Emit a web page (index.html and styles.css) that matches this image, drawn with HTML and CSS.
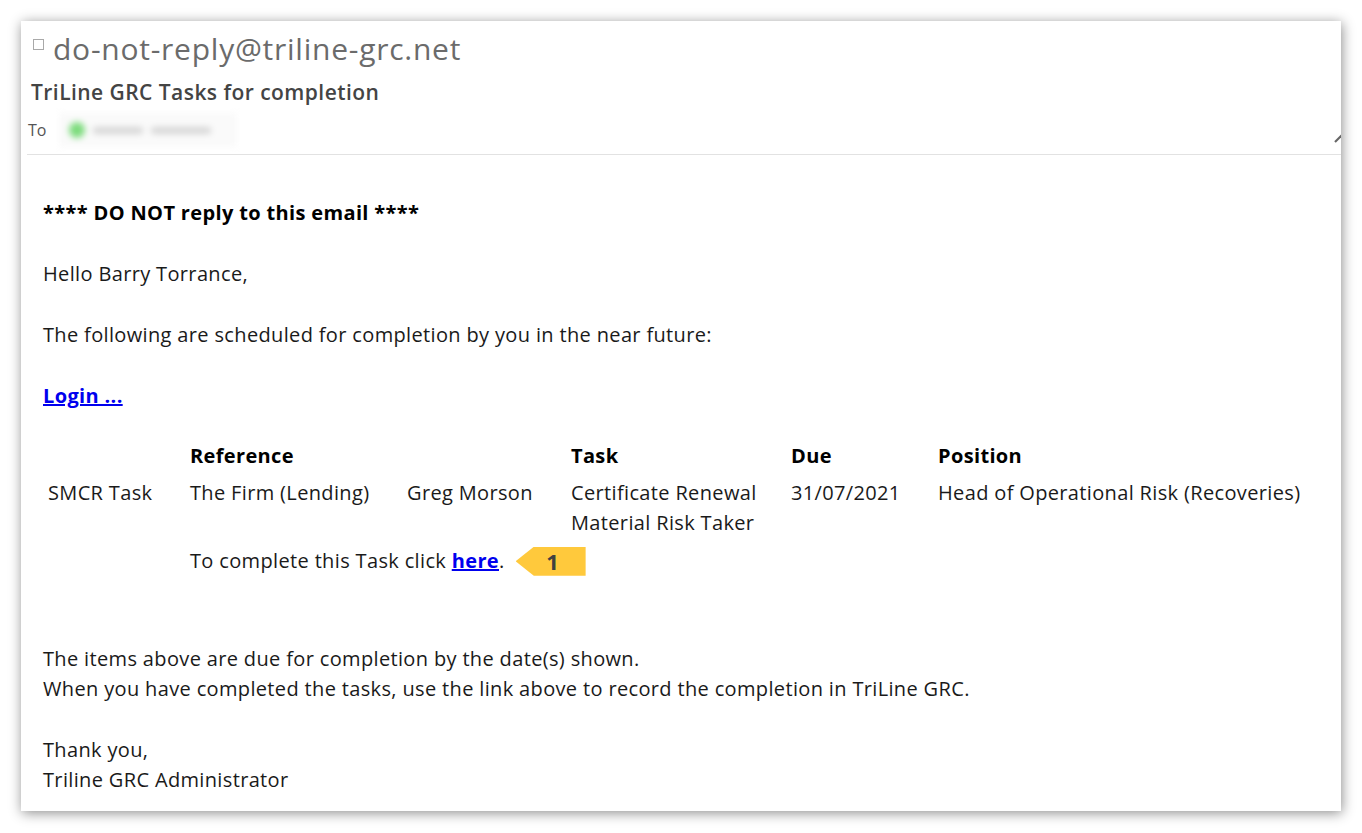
FILE: index.html
```html
<!DOCTYPE html>
<html>
<head>
<meta charset="utf-8">
<link rel="stylesheet" href="styles.css">
</head>
<body>
<div class="card">
  <header class="head">
    <div class="from"><span class="box"></span>do-not-reply@triline-grc.net</div>
    <div class="subject">TriLine GRC Tasks for completion</div>
    <div class="to"><span class="to-label">To</span><span class="recipient"><span class="dot"></span><span class="bar b1"></span><span class="bar b2"></span></span></div>
    <svg class="resize" width="10" height="10" viewBox="0 0 10 10"><path d="M1 9 L9 1" stroke="#666" stroke-width="2.2"/></svg>
  </header>
  <main class="body">
    <p class="strong">**** DO NOT reply to this email ****</p>
    <p>Hello Barry Torrance,</p>
    <p>The following are scheduled for completion by you in the near future:</p>
    <p><a class="link" href="#">Login ...</a></p>
    <div class="tasks">
      <div class="cell"></div>
      <div class="cell th">Reference</div>
      <div class="cell"></div>
      <div class="cell th">Task</div>
      <div class="cell th">Due</div>
      <div class="cell th">Position</div>

      <div class="cell">SMCR Task</div>
      <div class="cell">The Firm (Lending)</div>
      <div class="cell">Greg Morson</div>
      <div class="cell">Certificate Renewal<br>Material Risk Taker</div>
      <div class="cell">31/07/2021</div>
      <div class="cell">Head of Operational Risk (Recoveries)</div>

      <div class="cell"></div>
      <div class="cell span">To complete this Task click <a class="link" href="#">here</a>.<span class="badge"><span class="badge-num">1</span></span></div>
    </div>
    <p class="gap">The items above are due for completion by the date(s) shown.<br>When you have completed the tasks, use the link above to record the completion in TriLine GRC.</p>
    <p>Thank you,<br>Triline GRC Administrator</p>
  </main>
</div>
</body>
</html>
```

FILE: styles.css
```css
html, body {
  margin: 0;
  padding: 0;
  background: #ffffff;
}
body {
  padding: 21px 21px 22px 21px;
  font-family: "Open Sans", "Noto Sans", sans-serif;
}
.card {
  position: relative;
  background: #ffffff;
  height: 790px;
  box-shadow: 1px 2px 12px rgba(0, 0, 0, 0.45);
  overflow: hidden;
}
.head {
  position: relative;
  padding: 7px 0 0 0;
  border-bottom: 1px solid #e2e2e2;
  margin-left: 6px;
  height: 134px;
  box-sizing: border-box;
}
.from {
  display: flex;
  align-items: center;
  height: 40px;
  font-size: 30px;
  color: #6b6b6b;
  padding-left: 6px;
  letter-spacing: 0.75px;
}
.box {
  width: 11px;
  height: 11px;
  border: 1px solid #a9a9a9;
  margin-right: 9px;
  margin-top: -8px;
  box-sizing: border-box;
}
.subject {
  margin-top: 9px;
  height: 30px;
  line-height: 30px;
  font-size: 21px;
  font-weight: 600;
  color: #444444;
  padding-left: 4px;
  letter-spacing: 0.45px;
}
.to {
  margin-top: 11px;
  height: 24px;
  display: flex;
  align-items: center;
  padding-left: 1px;
}
.to-label {
  font-size: 16px;
  color: #555555;
  width: 31px;
}
.recipient {
  display: flex;
  align-items: center;
  gap: 8px;
  height: 34px;
  width: 168px;
  padding-left: 10px;
  background: #fafafa;
  filter: blur(3px);
}
.dot {
  width: 16px;
  height: 16px;
  border-radius: 50%;
  background: #7ddc7d;
}
.bar {
  height: 7px;
  background: #d6d6d6;
  border-radius: 3px;
}
.b1 { width: 50px; }
.b2 { width: 60px; }
.resize {
  position: absolute;
  right: -3px;
  top: 112px;
}
.body {
  padding: 43px 0 0 22px;
  font-size: 20px;
  letter-spacing: 0.35px;
  line-height: 30px;
  color: #1a1a1a;
}
p {
  margin: 0 0 31px 0;
}
.strong {
  font-weight: 700;
  color: #000;
}
.link {
  color: #0000ee;
  font-weight: 700;
  text-decoration: underline;
}
.tasks {
  display: grid;
  grid-template-columns: 142px 217px 164px 220px 147px auto;
  margin-top: -5px;
}
.cell {
  padding: 3.5px 5px;
}
.th {
  font-weight: 700;
  color: #000;
}
.span {
  grid-column: 2 / 7;
  padding-top: 5px;
}
.badge {
  display: inline-flex;
  vertical-align: middle;
  margin-left: 11px;
  margin-top: -3px;
  width: 70px;
  height: 29px;
  background: #ffc93c;
  clip-path: polygon(0 50%, 26% 0, 100% 0, 100% 100%, 26% 100%);
  align-items: center;
  justify-content: center;
}
.badge-num {
  margin-left: 4px;
  font-weight: 700;
  font-size: 22px;
  color: #404040;
}
.gap {
  margin-top: 64px;
}
```
